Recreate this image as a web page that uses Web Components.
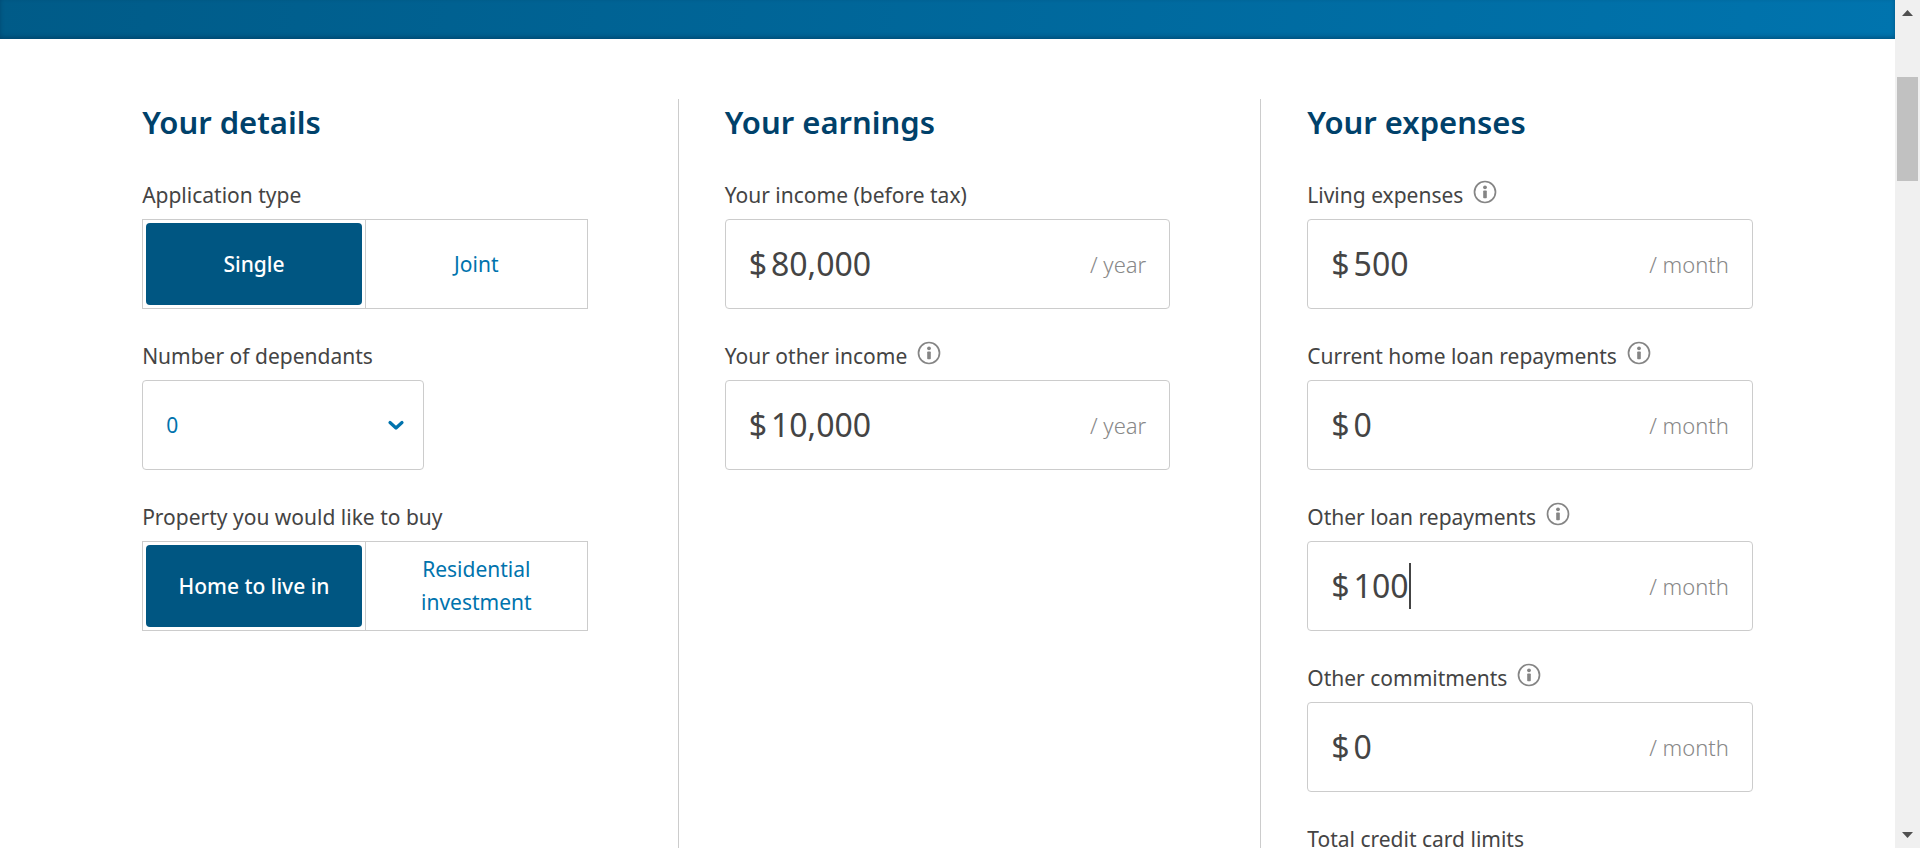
<!DOCTYPE html>
<html lang="en">
<head>
<meta charset="utf-8">
<title>Borrowing power calculator</title>
<style>
  body { margin: 0; font-family: "Noto Sans", "Open Sans", sans-serif; color: #444; background: #fff; }
</style>
</head>
<body>
<calc-shell>
  <calc-banner slot="top"></calc-banner>
  <calc-section heading="Your details">
    <choice-field label="Application type" options="Single|Joint"></choice-field>
    <pick-field label="Number of dependants" options="0|1|2|3|4|5"></pick-field>
    <choice-field label="Property you would like to buy" options="Home to live in|Residential investment"></choice-field>
  </calc-section>
  <calc-section heading="Your earnings" divided>
    <money-field label="Your income (before tax)" value="80,000" period="year"></money-field>
    <money-field label="Your other income" value="10,000" period="year" info></money-field>
  </calc-section>
  <calc-section heading="Your expenses" divided>
    <money-field label="Living expenses" value="500" period="month" info></money-field>
    <money-field label="Current home loan repayments" value="0" period="month" info></money-field>
    <money-field label="Other loan repayments" value="100" period="month" info active></money-field>
    <money-field label="Other commitments" value="0" period="month" info></money-field>
    <money-field label="Total credit card limits"></money-field>
  </calc-section>
  <page-scrollbar slot="side"></page-scrollbar>
</calc-shell>

<script>
const define = (name, render) => customElements.define(name, class extends HTMLElement {
  connectedCallback() {
    if (this.shadowRoot) return;
    this.attachShadow({ mode: 'open' }).innerHTML = render(this);
  }
});

const fieldStyle = `
  *, *::before { box-sizing: border-box; }
  :host { display: block; }
  .label { display: flex; align-items: flex-start; gap: 10px; margin: 0 0 9px; padding: 0; height: 30px;
           font-size: 21px; line-height: 30px; white-space: nowrap; }
`;

define('calc-shell', () => `
  <style>
    :host { display: grid; grid-template-columns: minmax(0, 1fr) auto; height: 100vh; overflow: hidden; }
    .page { display: flex; flex-direction: column; min-height: 0; overflow: hidden; }
    main { display: flex; gap: 90px; padding: 60px 7.5% 0; }
  </style>
  <div class="page"><slot name="top"></slot><main><slot></slot></main></div>
  <slot name="side"></slot>
`);

define('calc-banner', () => `
  <style>
    :host { display: block; flex: none; height: 39px;
            background: linear-gradient(100deg, #005b88, #0074ae);
            box-shadow: inset 0 -2px 4px rgba(0, 40, 70, .4); }
  </style>
`);

define('calc-section', el => `
  <style>
    :host { display: block; flex: 1 1 0; min-width: 0; }
    :host([divided]) { border-left: 1px solid #ccc; padding-left: 46px; }
    h2 { margin: 0 0 35px; font-size: 31px; line-height: 46px; font-weight: 600; color: #00416a; white-space: nowrap; }
    .fields { display: flex; flex-direction: column; gap: 32px; }
  </style>
  <h2>${el.getAttribute('heading')}</h2>
  <div class="fields"><slot></slot></div>
`);

define('info-button', () => `
  <style>
    :host { display: block; height: 24px; }
    button { display: block; width: 24px; height: 24px; padding: 0; border: 0; background: none; color: #858585; cursor: pointer; }
    svg { display: block; }
  </style>
  <button type="button" aria-label="More information">
    <svg width="24" height="24" viewBox="0 0 24 24" aria-hidden="true">
      <circle cx="12" cy="12" r="10.5" fill="none" stroke="currentColor" stroke-width="1.7"/>
      <circle cx="12" cy="7.3" r="1.9" fill="currentColor"/>
      <rect x="10.2" y="10.4" width="3.6" height="7.8" rx=".8" fill="currentColor"/>
    </svg>
  </button>
`);

define('money-field', el => {
  const active = el.hasAttribute('active');
  const value = el.getAttribute('value') || '';
  const period = el.getAttribute('period');
  return `
  <style>${fieldStyle}
    .box { display: flex; align-items: center; height: 90px; padding: 0 23px; border: 1px solid #ccc; border-radius: 4px; }
    .sign, input { font-size: 32px; line-height: 46px; color: #444; }
    .sign { margin-right: 4px; }
    input { flex: 1; min-width: 0; height: 46px; padding: 0; border: 0; outline: 0; background: none; font-family: inherit; }
    input.fit { flex: none; field-sizing: content; caret-color: transparent; }
    .caret { width: 2px; height: 46px; background: #444; }
    .period { margin-left: auto; font-size: 22px; line-height: 30px; font-weight: 300; color: #888; white-space: nowrap; }
  </style>
  <div class="label"><label for="amount">${el.getAttribute('label')}</label>${el.hasAttribute('info') ? '<info-button></info-button>' : ''}</div>
  <div class="box">
    ${value ? '<span class="sign">$</span>' : ''}
    <input id="amount" type="text" inputmode="numeric" value="${value}"${active ? ' class="fit" size="3"' : ''}>
    ${active ? '<span class="caret"></span>' : ''}
    ${period ? `<span class="period">/ ${period}</span>` : ''}
  </div>`;
});

define('pick-field', el => `
  <style>${fieldStyle}
    .box { display: grid; width: 282px; max-width: 100%; height: 90px; align-items: center; }
    select, svg { grid-area: 1 / 1; }
    select { appearance: none; width: 100%; height: 100%; padding: 0 60px 0 23px; border: 1px solid #ccc; border-radius: 4px;
             background: #fff; color: #0073ad; font-family: inherit; font-size: 21px; }
    svg { justify-self: end; margin-right: 19px; pointer-events: none; }
  </style>
  <label class="label" for="pick">${el.getAttribute('label')}</label>
  <div class="box">
    <select id="pick">${el.getAttribute('options').split('|').map(o => `<option>${o}</option>`).join('')}</select>
    <svg width="18" height="12" viewBox="0 0 18 12" aria-hidden="true"><path d="M3 3.500l6 5.500 6-5.500" fill="none" stroke="#0073ad" stroke-width="3.2" stroke-linecap="round" stroke-linejoin="round"/></svg>
  </div>
`);

define('choice-field', el => `
  <style>${fieldStyle}
    fieldset { margin: 0; padding: 0; border: 0; min-width: 0; }
    .options { display: grid; grid-template-columns: 1fr 1fr; height: 90px; border: 1px solid #ccc; }
    .option { position: relative; display: flex; padding: 3px; min-width: 0; cursor: pointer; }
    .option + .option { border-left: 1px solid #ccc; }
    input { position: absolute; inset: 0; width: 100%; height: 100%; margin: 0; opacity: 0; cursor: pointer; }
    .face { flex: 1; display: flex; align-items: center; justify-content: center; padding: 0 32px; border-radius: 4px;
            text-align: center; font-size: 21px; line-height: 33px; color: #0073ad; }
    input:checked + .face { background: #005682; color: #fff; font-weight: 500; padding: 0 8px; }
  </style>
  <fieldset>
    <legend class="label">${el.getAttribute('label')}</legend>
    <div class="options">${el.getAttribute('options').split('|').map((o, i) => `
      <label class="option"><input type="radio" name="choice"${i ? '' : ' checked'}><span class="face">${o}</span></label>`).join('')}
    </div>
  </fieldset>
`);

define('page-scrollbar', () => `
  <style>
    :host { display: flex; flex-direction: column; width: 25px; background: #f0f0f0; }
    svg { display: block; flex: none; }
    .before { flex: 52; }
    .thumb { flex: 104; margin: 0 2px; background: #c1c1c1; }
    .after { flex: 642; }
  </style>
  <svg width="25" height="25" viewBox="0 0 25 25" aria-hidden="true"><path d="M7 16l5.500-6 5.500 6z" fill="#505050"/></svg>
  <div class="before"></div><div class="thumb"></div><div class="after"></div>
  <svg width="25" height="25" viewBox="0 0 25 25" aria-hidden="true"><path d="M7 9l5.500 6 5.500-6z" fill="#505050"/></svg>
`);
</script>
</body>
</html>
